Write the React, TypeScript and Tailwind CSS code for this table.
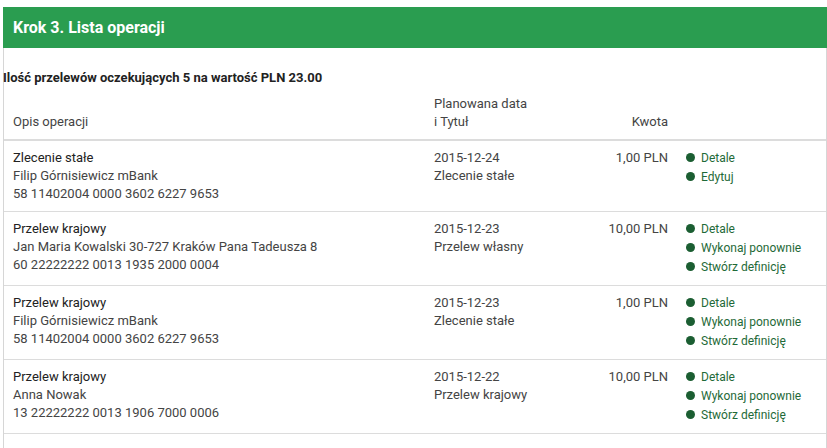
type Op = {
  type: string;
  name: string;
  account: string;
  date: string;
  title: string;
  amount: string;
  links: string[];
};

const ops: Op[] = [
  {
    type: 'Zlecenie stałe',
    name: 'Filip Górnisiewicz mBank',
    account: '58 11402004 0000 3602 6227 9653',
    date: '2015-12-24',
    title: 'Zlecenie stałe',
    amount: '1,00 PLN',
    links: ['Detale', 'Edytuj'],
  },
  {
    type: 'Przelew krajowy',
    name: 'Jan Maria Kowalski 30-727 Kraków Pana Tadeusza 8',
    account: '60 22222222 0013 1935 2000 0004',
    date: '2015-12-23',
    title: 'Przelew własny',
    amount: '10,00 PLN',
    links: ['Detale', 'Wykonaj ponownie', 'Stwórz definicję'],
  },
  {
    type: 'Przelew krajowy',
    name: 'Filip Górnisiewicz mBank',
    account: '58 11402004 0000 3602 6227 9653',
    date: '2015-12-23',
    title: 'Zlecenie stałe',
    amount: '1,00 PLN',
    links: ['Detale', 'Wykonaj ponownie', 'Stwórz definicję'],
  },
  {
    type: 'Przelew krajowy',
    name: 'Anna Nowak',
    account: '13 22222222 0013 1906 7000 0006',
    date: '2015-12-22',
    title: 'Przelew krajowy',
    amount: '10,00 PLN',
    links: ['Detale', 'Wykonaj ponownie', 'Stwórz definicję'],
  },
];

const App = () => {
  return (
    <div className="w-[827px] h-[448px] overflow-hidden bg-white pt-[7px] pl-[3px] font-['Roboto',sans-serif]">
      <div className="w-[824px] h-[460px] border-x border-[#d6d6d6]">
        {/* Step header */}
        <div className="-mx-px h-[41px] bg-[#2a9d50] flex items-center pl-[10px]">
          <h2 className="text-[16px] font-bold text-white">Krok 3. Lista operacji</h2>
        </div>

        {/* Summary */}
        <p className="mt-[21px] -ml-px h-[18px] leading-[18px] text-[13px] font-bold text-[#222]">
          Ilość przelewów oczekujących 5 na wartość PLN 23.00
        </p>

        {/* Table head */}
        <div className="flex pt-[8px] pb-[8px] border-b-2 border-[#dcdcdc] text-[13px] leading-[18px] text-[#444]">
          <div className="w-[430px] pl-[9px] self-end">Opis operacji</div>
          <div className="w-[150px]">
            Planowana data
            <br />i Tytuł
          </div>
          <div className="w-[84px] text-right self-end">Kwota</div>
        </div>

        {/* Rows */}
        {ops.map((op, i) => (
          <div
            key={i}
            className="flex items-start py-[8px] border-b border-[#dcdcdc] text-[13px] leading-[18px] text-[#444]"
          >
            <div className="w-[430px] pl-[9px]">
              <div className="text-[#222]">{op.type}</div>
              <div>{op.name}</div>
              <div>{op.account}</div>
            </div>
            <div className="w-[150px]">
              <div>{op.date}</div>
              <div>{op.title}</div>
            </div>
            <div className="w-[84px] text-right">{op.amount}</div>
            <ul className="pl-[18px] -mt-px mb-px">
              {op.links.map((l) => (
                <li key={l} className="flex items-center h-[19px] text-[12px] text-[#1f6a38]">
                  <span className="w-[9px] h-[9px] rounded-full bg-[#1b5e32] mr-[6px]" />
                  {l}
                </li>
              ))}
            </ul>
          </div>
        ))}
      </div>
    </div>
  );
};

export default App;
